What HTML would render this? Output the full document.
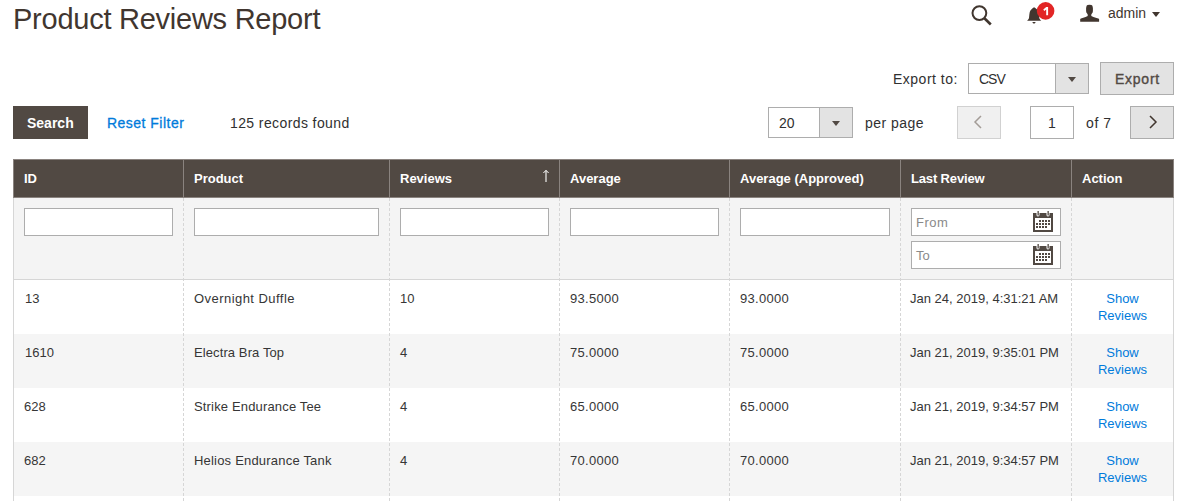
<!DOCTYPE html>
<html><head><meta charset="utf-8">
<style>
*{box-sizing:border-box;margin:0;padding:0}
html,body{width:1190px;height:501px;overflow:hidden;background:#fff}
body{position:relative;font-family:"Liberation Sans",sans-serif;color:#303030}
.a{position:absolute;white-space:nowrap;line-height:20px}
.t14{font-size:14px}
.t13{font-size:13px}
.b{font-weight:700}
.title{position:absolute;left:13px;top:-1px;font-size:29px;letter-spacing:-0.25px;line-height:40px;color:#41362f;white-space:nowrap}
.box{position:absolute}
.sel{position:absolute;border:1px solid #adadad;background:#fff}
.sel .dd{position:absolute;top:0;right:0;bottom:0;width:33px;background:#e3e3e3;border-left:1px solid #adadad}
.arr{position:absolute;width:0;height:0;border-left:4px solid transparent;border-right:4px solid transparent;border-top:5px solid #514943}
.hdr{position:absolute;left:13px;top:159px;width:1161px;height:39px;background:#514943;border:1px solid #8a837f}
.hb{position:absolute;top:159px;height:39px;width:1px;background:#8a837f}
.th{position:absolute;top:169px;color:#fff;font-size:13px;font-weight:700;line-height:20px;white-space:nowrap}
.filt{position:absolute;left:13px;top:198px;width:1161px;height:82px;background:#f4f4f4}
.inp{position:absolute;top:208px;height:28px;background:#fff;border:1px solid #adadad}
.row{position:absolute;left:13px;width:1161px;height:54px}
.alt{background:#f5f5f5}
.dash{position:absolute;top:198px;height:303px;width:0;border-left:1px dashed #d6d6d6}
.td{position:absolute;font-size:13px;line-height:17px;color:#363636;white-space:nowrap}
.lnk{color:#007bdb}
.act{position:absolute;left:1072px;width:101px;text-align:center;font-size:13px;line-height:17px;color:#007bdb}
</style></head>
<body>
<div class="title">Product Reviews Report</div>

<!-- top right header -->
<svg class="box" style="left:968px;top:2px" width="26" height="26" viewBox="0 0 26 26">
  <circle cx="11.4" cy="11.1" r="6.9" fill="none" stroke="#41362f" stroke-width="2"/>
  <line x1="16.4" y1="16.2" x2="22.8" y2="22.5" stroke="#41362f" stroke-width="2.6"/>
</svg>
<svg class="box" style="left:1024px;top:4px" width="20" height="22" viewBox="0 0 20 22">
  <path d="M10 3.2 C9 3.8 7.6 4.8 6.6 6.2 C5.8 7.4 5.5 9 5.3 11 L5 14 C4.8 15.3 3.8 16 3 16.7 L17.3 16.7 C16.5 16 15.5 15.3 15.3 14 L15 11 C14.8 9 14.5 7.4 13.7 6.2 C12.7 4.8 11.2 3.8 10 3.2 Z" fill="#41362f"/>
  <path d="M8.4 17.9 L11.6 17.9 C11.3 19 10.7 19.6 10 19.6 C9.3 19.6 8.7 19 8.4 17.9 Z" fill="#41362f"/>
</svg>
<svg class="box" style="left:1036px;top:1px" width="20" height="20" viewBox="0 0 20 20">
  <circle cx="9.6" cy="9.9" r="8.8" fill="#e22626"/>
  <path d="M10.2 6 L12.1 6 L12.1 14.2 L10.2 14.2 L10.2 8.6 L8.3 10 L7.3 8.6 Z" fill="#fff"/>
</svg>
<svg class="box" style="left:1079px;top:4px" width="22" height="19" viewBox="0 0 22 19">
  <path d="M7.6 1.8 Q8 0.7 10.5 0.7 Q13 0.7 13.4 1.8 L13.9 4 L13.9 7 Q13.9 8.6 12.9 9.6 L12.3 10.4 L12.3 12.1 Q14 13 17.5 14 Q19.8 14.6 20.1 15.1 L20.1 17.8 L1.2 17.8 L1.2 15.1 Q1.5 14.6 3.5 14 Q7 13 8.7 12.1 L8.7 10.4 L8.1 9.6 Q7.1 8.6 7.1 7 L7.1 4 Z" fill="#41362f"/>
</svg>
<div class="a t14" style="left:1108px;top:3px;color:#41362f">admin</div>
<div class="arr" style="left:1152px;top:12px;border-top-color:#41362f"></div>

<!-- export row -->
<div class="a t14" style="left:893px;top:69px;letter-spacing:0.5px">Export to:</div>
<div class="sel" style="left:968px;top:63px;width:121px;height:31px"><div class="dd"></div></div>
<div class="a t14" style="left:979px;top:69px;letter-spacing:-1px">CSV</div>
<div class="arr" style="left:1068px;top:77px"></div>
<div class="box" style="left:1100px;top:62px;width:74px;height:33px;background:#e3e3e3;border:1px solid #adadad"></div>
<div class="a t14" style="left:1115px;top:69px;color:#514943;-webkit-text-stroke:0.35px #514943;letter-spacing:0.75px">Export</div>

<!-- search row -->
<div class="box" style="left:13px;top:106px;width:75px;height:33px;background:#514943"></div>
<div class="a t14 b" style="left:27px;top:113px;color:#fff">Search</div>
<div class="a t14" style="left:107px;top:113px;color:#007bdb;-webkit-text-stroke:0.3px #007bdb;letter-spacing:0.48px">Reset Filter</div>
<div class="a t14" style="left:230px;top:113px;letter-spacing:0.4px">125 records found</div>

<div class="sel" style="left:768px;top:107px;width:85px;height:31px"><div class="dd"></div></div>
<div class="a t14" style="left:779px;top:113px">20</div>
<div class="arr" style="left:832px;top:121px"></div>
<div class="a t14" style="left:865px;top:113px;letter-spacing:0.45px">per page</div>

<div class="box" style="left:957px;top:106px;width:44px;height:33px;background:#f0f0f0;border:1px solid #d1d1d1"></div>
<svg class="box" style="left:970px;top:112px" width="16" height="20" viewBox="0 0 16 20"><path d="M11 4 L5 10 L11 16" fill="none" stroke="#a39c97" stroke-width="1.5"/></svg>
<div class="box" style="left:1030px;top:106px;width:44px;height:33px;background:#fff;border:1px solid #adadad"></div>
<div class="a t14" style="left:1048px;top:113px">1</div>
<div class="a t14" style="left:1086px;top:113px;letter-spacing:0.6px">of 7</div>
<div class="box" style="left:1130px;top:106px;width:44px;height:33px;background:#e3e3e3;border:1px solid #adadad"></div>
<svg class="box" style="left:1145px;top:112px" width="16" height="20" viewBox="0 0 16 20"><path d="M5 4 L11 10 L5 16" fill="none" stroke="#41362f" stroke-width="1.5"/></svg>

<!-- table header -->
<div class="hdr"></div>
<div class="hb" style="left:183px"></div>
<div class="hb" style="left:389px"></div>
<div class="hb" style="left:559px"></div>
<div class="hb" style="left:729px"></div>
<div class="hb" style="left:900px"></div>
<div class="hb" style="left:1071px"></div>
<div class="th" style="left:24px">ID</div>
<div class="th" style="left:194px">Product</div>
<div class="th" style="left:400px">Reviews</div>
<div class="th" style="left:570px">Average</div>
<div class="th" style="left:740px">Average (Approved)</div>
<div class="th" style="left:911px;letter-spacing:-0.15px">Last Review</div>
<div class="th" style="left:1082px">Action</div>
<svg class="box" style="left:540px;top:168px" width="12" height="16" viewBox="0 0 12 16">
  <line x1="6" y1="2.6" x2="6" y2="14" stroke="#fff" stroke-width="1.1"/>
  <path d="M3.4 5 L6 2.3 L8.6 5" fill="none" stroke="#fff" stroke-width="1"/>
</svg>

<!-- filter row -->
<div class="filt"></div>
<div class="box" style="left:13px;top:279px;width:1161px;height:1px;background:#d6d6d6"></div>
<div class="inp" style="left:24px;width:149px"></div>
<div class="inp" style="left:194px;width:185px"></div>
<div class="inp" style="left:400px;width:149px"></div>
<div class="inp" style="left:570px;width:149px"></div>
<div class="inp" style="left:740px;width:150px"></div>
<div class="inp" style="left:911px;width:150px"></div>
<div class="inp" style="left:911px;top:241px;width:150px"></div>
<div class="td" style="left:916px;top:214px;color:#8a8a8a;letter-spacing:0.5px">From</div>
<div class="td" style="left:916px;top:247px;color:#8a8a8a">To</div>
<svg class="box" style="left:1033px;top:211px" width="20" height="22" viewBox="0 0 20 22" shape-rendering="crispEdges">
  <rect x="0" y="2" width="20" height="5" fill="#514943"/>
  <rect x="0" y="2" width="2" height="19" fill="#514943"/>
  <rect x="18" y="2" width="2" height="19" fill="#514943"/>
  <rect x="0" y="19" width="20" height="2" fill="#514943"/>
  <rect x="3.5" y="0.5" width="3" height="5" rx="1.4" fill="#fff" shape-rendering="auto"/><rect x="4.5" y="0" width="1.3" height="4.5" fill="#514943" shape-rendering="auto"/>
  <rect x="13.5" y="0.5" width="3" height="5" rx="1.4" fill="#fff" shape-rendering="auto"/><rect x="14.5" y="0" width="1.3" height="4.5" fill="#514943" shape-rendering="auto"/>
  <g fill="#514943">
  <rect x="6" y="9" width="2" height="2"/><rect x="9" y="9" width="2" height="2"/><rect x="12" y="9" width="2" height="2"/><rect x="15" y="9" width="2" height="2"/>
  <rect x="3" y="12" width="2" height="2"/><rect x="6" y="12" width="2" height="2"/><rect x="9" y="12" width="2" height="2"/><rect x="12" y="12" width="2" height="2"/><rect x="15" y="12" width="2" height="2"/>
  <rect x="3" y="15" width="2" height="2"/><rect x="6" y="15" width="2" height="2"/><rect x="9" y="15" width="2" height="2"/><rect x="12" y="15" width="2" height="2"/>
  </g>
</svg>
<svg class="box" style="left:1033px;top:244px" width="20" height="22" viewBox="0 0 20 22" shape-rendering="crispEdges">
  <rect x="0" y="2" width="20" height="5" fill="#514943"/>
  <rect x="0" y="2" width="2" height="19" fill="#514943"/>
  <rect x="18" y="2" width="2" height="19" fill="#514943"/>
  <rect x="0" y="19" width="20" height="2" fill="#514943"/>
  <rect x="3.5" y="0.5" width="3" height="5" rx="1.4" fill="#fff" shape-rendering="auto"/><rect x="4.5" y="0" width="1.3" height="4.5" fill="#514943" shape-rendering="auto"/>
  <rect x="13.5" y="0.5" width="3" height="5" rx="1.4" fill="#fff" shape-rendering="auto"/><rect x="14.5" y="0" width="1.3" height="4.5" fill="#514943" shape-rendering="auto"/>
  <g fill="#514943">
  <rect x="6" y="9" width="2" height="2"/><rect x="9" y="9" width="2" height="2"/><rect x="12" y="9" width="2" height="2"/><rect x="15" y="9" width="2" height="2"/>
  <rect x="3" y="12" width="2" height="2"/><rect x="6" y="12" width="2" height="2"/><rect x="9" y="12" width="2" height="2"/><rect x="12" y="12" width="2" height="2"/><rect x="15" y="12" width="2" height="2"/>
  <rect x="3" y="15" width="2" height="2"/><rect x="6" y="15" width="2" height="2"/><rect x="9" y="15" width="2" height="2"/><rect x="12" y="15" width="2" height="2"/>
  </g>
</svg>

<!-- rows -->
<div class="row" style="top:280px"></div>
<div class="row alt" style="top:334px"></div>
<div class="row" style="top:388px"></div>
<div class="row alt" style="top:442px"></div>

<div class="box" style="left:13px;top:198px;width:1px;height:303px;background:#d6d6d6"></div>
<div class="box" style="left:1173px;top:198px;width:1px;height:303px;background:#d6d6d6"></div>
<div class="dash" style="left:183px"></div>
<div class="dash" style="left:389px"></div>
<div class="dash" style="left:559px"></div>
<div class="dash" style="left:729px"></div>
<div class="dash" style="left:900px"></div>
<div class="dash" style="left:1071px"></div>

<div class="td" style="left:25px;top:290px">13</div>
<div class="td" style="left:194px;top:290px;letter-spacing:0.45px">Overnight Duffle</div>
<div class="td" style="left:400px;top:290px">10</div>
<div class="td" style="left:570px;top:290px;letter-spacing:0.3px">93.5000</div>
<div class="td" style="left:740px;top:290px;letter-spacing:0.3px">93.0000</div>
<div class="td" style="left:910px;top:290px">Jan 24, 2019, 4:31:21 AM</div>
<div class="act" style="top:290px">Show<br>Reviews</div>

<div class="td" style="left:25px;top:344px">1610</div>
<div class="td" style="left:194px;top:344px;letter-spacing:0.1px">Electra Bra Top</div>
<div class="td" style="left:400px;top:344px">4</div>
<div class="td" style="left:570px;top:344px;letter-spacing:0.3px">75.0000</div>
<div class="td" style="left:740px;top:344px;letter-spacing:0.3px">75.0000</div>
<div class="td" style="left:910px;top:344px">Jan 21, 2019, 9:35:01 PM</div>
<div class="act" style="top:344px">Show<br>Reviews</div>

<div class="td" style="left:24px;top:398px">628</div>
<div class="td" style="left:194px;top:398px;letter-spacing:0.16px">Strike Endurance Tee</div>
<div class="td" style="left:400px;top:398px">4</div>
<div class="td" style="left:570px;top:398px;letter-spacing:0.3px">65.0000</div>
<div class="td" style="left:740px;top:398px;letter-spacing:0.3px">65.0000</div>
<div class="td" style="left:910px;top:398px">Jan 21, 2019, 9:34:57 PM</div>
<div class="act" style="top:398px">Show<br>Reviews</div>

<div class="td" style="left:24px;top:452px">682</div>
<div class="td" style="left:194px;top:452px;letter-spacing:0.2px">Helios Endurance Tank</div>
<div class="td" style="left:400px;top:452px">4</div>
<div class="td" style="left:570px;top:452px;letter-spacing:0.3px">70.0000</div>
<div class="td" style="left:740px;top:452px;letter-spacing:0.3px">70.0000</div>
<div class="td" style="left:910px;top:452px">Jan 21, 2019, 9:34:57 PM</div>
<div class="act" style="top:452px">Show<br>Reviews</div>

</body></html>
